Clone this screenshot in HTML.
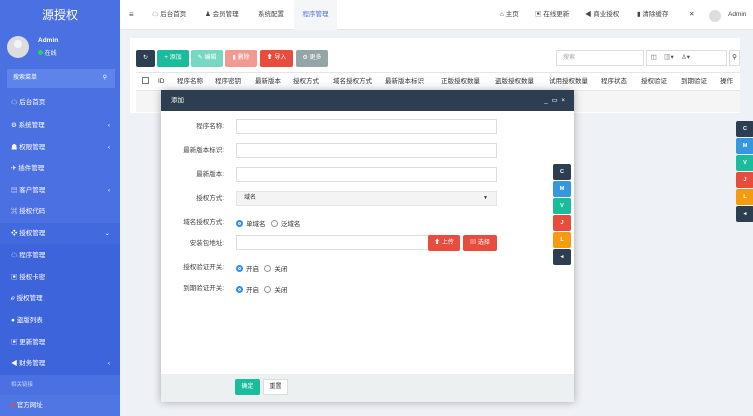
<!DOCTYPE html>
<html><head><meta charset="utf-8"><style>
*{box-sizing:border-box;margin:0;padding:0}
body{width:753px;height:405px;overflow:hidden;font-family:"Liberation Sans","Noto Sans CJK SC",sans-serif;font-size:7px;color:#333;background:#eef1f5;position:relative}
.a{position:absolute}
.sb{left:0;top:0;width:120px;height:405px;background:#4a70e2}
.logo{left:0;top:0;width:120px;height:31px;background:#4a70e2;color:#fff;font-size:12px;text-align:center;line-height:31px}
.mi{left:0;width:120px;height:21px;line-height:21px;color:#fff;padding-left:11px;font-size:6.5px}
.mi .ar{position:absolute;right:10px;top:0}
.top{left:120px;top:0;width:633px;height:30px;background:#fff;border-bottom:1px solid #e6e6e6}
.tn{top:0;height:30px;line-height:30px;font-size:6.5px;color:#444}
.btn{top:50px;height:17px;line-height:17px;color:#fff;font-size:6px;text-align:center;border-radius:2px}
.th{top:72px;height:19px;line-height:19px;font-size:6.5px;color:#333}
.lab{left:161px;width:63px;text-align:right;font-size:6.5px;color:#444;line-height:8px}
.inp{left:236px;width:261px;height:15px;border:1px solid #ddd;background:#fff}
.rad{display:inline-block;width:7px;height:7px;border-radius:50%;border:1px solid #999;vertical-align:-1px;margin-right:3px}
.rad.on{border:2px solid #2b8ef0;background:#2b8ef0;box-shadow:inset 0 0 0 1px #fff}
.sq{width:18px;height:16px;color:#fff;font-size:5.5px;text-align:center;line-height:16px;border-radius:2px;font-weight:bold}
</style></head><body>
<div class="a sb"></div>
<div class="a logo">源授权</div>
<div class="a" style="left:7px;top:36px;width:22px;height:22px;border-radius:50%;background:#ddd"></div>
<div class="a" style="left:14px;top:40px;width:8px;height:8px;border-radius:50%;background:#f4f4f4"></div>
<div class="a" style="left:38px;top:37px;color:#fff;font-weight:bold;font-size:6.5px">Admin</div>
<div class="a" style="left:38px;top:48px;color:#fff;font-size:6px"><span style="display:inline-block;width:5px;height:5px;border-radius:50%;background:#2ecc71"></span> 在线</div>
<div class="a" style="left:7px;top:69px;width:108px;height:19px;background:#5e84ea;color:#fff;line-height:19px;padding-left:6px;font-size:6px">搜索菜单<span style="position:absolute;right:8px">&#9906;</span></div>
<div class="a mi" style="top:92px">☁ 后台首页</div>
<div class="a mi" style="top:115px">⚙ 系统管理<span class="ar">‹</span></div>
<div class="a mi" style="top:137px">☗ 权限管理<span class="ar">‹</span></div>
<div class="a mi" style="top:158px">✈ 插件管理</div>
<div class="a mi" style="top:180px">▤ 客户管理<span class="ar">‹</span></div>
<div class="a mi" style="top:201px">⌘ 授权代码</div>
<div class="a mi" style="top:223px;background:#426ade">❖ 授权管理<span class="ar">⌄</span></div>
<div class="a" style="left:0;top:244px;width:120px;height:131px;background:#3e64dc"></div>
<div class="a mi" style="top:245px">☁ 程序管理</div>
<div class="a mi" style="top:267px">▣ 授权卡密</div>
<div class="a mi" style="top:288px">ℯ 授权管理</div>
<div class="a mi" style="top:310px">● 盗版列表</div>
<div class="a mi" style="top:332px">▣ 更新管理</div>
<div class="a mi" style="top:353px">◀ 财务管理<span class="ar">‹</span></div>
<div class="a mi" style="top:375px;background:#4a70e2;color:#c8d4f8;font-size:5.5px">相关链接</div>
<div class="a mi" style="top:395px;background:#5076e4"><span style="color:#e74c3c">■</span> 官方网址</div>

<div class="a top"></div>
<div class="a tn" style="left:129px;font-size:8px">≡</div>
<div class="a tn" style="left:152px">☁ 后台首页</div>
<div class="a tn" style="left:205px">♟ 会员管理</div>
<div class="a tn" style="left:258px">系统配置</div>
<div class="a tn" style="left:294px;width:43px;background:#f4f6f8;color:#4a70e2;text-align:center">程序管理</div>
<div class="a tn" style="left:500px">⌂ 主页</div>
<div class="a tn" style="left:535px">▣ 在线更新</div>
<div class="a tn" style="left:585px">◀ 商业授权</div>
<div class="a tn" style="left:637px">▮ 清除缓存</div>
<div class="a tn" style="left:689px">✕</div>
<div class="a" style="left:709px;top:10px;width:12px;height:12px;border-radius:50%;background:#ddd"></div>
<div class="a tn" style="left:728px">Admin</div>

<div class="a" style="left:130px;top:38px;width:610px;height:75px;background:#fff"></div>
<div class="a btn" style="left:136px;width:19px;background:#2c3e50">↻</div>
<div class="a btn" style="left:157px;width:32px;background:#1abc9c">+ 添加</div>
<div class="a btn" style="left:191px;width:32px;background:#76d8c3">✎ 编辑</div>
<div class="a btn" style="left:225px;width:32px;background:#f09a92">▮ 删除</div>
<div class="a btn" style="left:260px;width:33px;background:#e74c3c">⬆ 导入</div>
<div class="a btn" style="left:296px;width:32px;background:#95a5a6">⚙ 更多</div>
<div class="a" style="left:556px;top:50px;width:88px;height:16px;border:1px solid #ddd;font-size:6px;color:#aaa;line-height:14px;padding-left:6px">搜索</div>
<div class="a" style="left:646px;top:50px;width:81px;height:16px;border:1px solid #ddd;font-size:6.5px;line-height:14px;color:#555">&nbsp;&nbsp;◫&nbsp;&nbsp;&nbsp;&nbsp;▥▾&nbsp;&nbsp;&nbsp;&nbsp;♙▾</div>
<div class="a" style="left:729px;top:50px;width:11px;height:16px;border:1px solid #ddd;font-size:6.5px;line-height:14px;text-align:center">&#9906;</div>
<div class="a" style="left:136px;top:72px;width:604px;height:19px;border-top:1px solid #e5e5e5;border-bottom:1px solid #e5e5e5"></div>
<div class="a" style="left:136px;top:91px;width:604px;height:21px;background:#f5f5f5"></div>
<div class="a" style="left:142px;top:77px;width:7px;height:7px;border:1px solid #777"></div>
<div class="a th" style="left:158px">ID</div>
<div class="a th" style="left:177px">程序名称</div>
<div class="a th" style="left:215px">程序密钥</div>
<div class="a th" style="left:255px">最新版本</div>
<div class="a th" style="left:293px">授权方式</div>
<div class="a th" style="left:333px">域名授权方式</div>
<div class="a th" style="left:385px">最新版本标识</div>
<div class="a th" style="left:441px">正版授权数量</div>
<div class="a th" style="left:495px">盗版授权数量</div>
<div class="a th" style="left:549px">试用授权数量</div>
<div class="a th" style="left:601px">程序状态</div>
<div class="a th" style="left:641px">授权验证</div>
<div class="a th" style="left:681px">到期验证</div>
<div class="a th" style="left:720px">操作</div>

<div class="a" style="left:736px;top:121px">
<div class="sq" style="background:#2c3e50">C</div><div class="sq" style="background:#3498db;margin-top:1px">M</div><div class="sq" style="background:#1abc9c;margin-top:1px">V</div><div class="sq" style="background:#e74c3c;margin-top:1px">J</div><div class="sq" style="background:#f39c12;margin-top:1px">L</div><div class="sq" style="background:#2c3e50;margin-top:1px">◂</div>
</div>

<div class="a" style="left:161px;top:90px;width:413px;height:312px;background:#fff;box-shadow:0 0 8px rgba(0,0,0,.3)"></div>
<div class="a" style="left:161px;top:90px;width:413px;height:21px;background:#2c3e50;color:#fff;line-height:21px;padding-left:10px;font-size:6.5px">添加<span style="position:absolute;right:9px">_&nbsp;&nbsp;▭&nbsp;&nbsp;×</span></div>
<div class="a" style="left:553px;top:164px">
<div class="sq" style="background:#2c3e50">C</div><div class="sq" style="background:#3498db;margin-top:1px">M</div><div class="sq" style="background:#1abc9c;margin-top:1px">V</div><div class="sq" style="background:#e74c3c;margin-top:1px">J</div><div class="sq" style="background:#f39c12;margin-top:1px">L</div><div class="sq" style="background:#2c3e50;margin-top:1px">◂</div>
</div>
<div class="a lab" style="top:123px">程序名称:</div><div class="a inp" style="top:119px"></div>
<div class="a lab" style="top:147px">最新版本标识:</div><div class="a inp" style="top:143px"></div>
<div class="a lab" style="top:171px">最新版本:</div><div class="a inp" style="top:167px"></div>
<div class="a lab" style="top:195px">授权方式:</div><div class="a inp" style="top:191px;background:#f4f4f4;border-color:#e4e4e4;font-size:6px;line-height:13px;padding-left:7px">域名<span style="position:absolute;right:8px;font-size:5px">▼</span></div>
<div class="a lab" style="top:219px">域名授权方式:</div><div class="a" style="left:236px;top:218px;font-size:6.5px"><span class="rad on"></span>单域名&nbsp;&nbsp;&nbsp;<span class="rad"></span>泛域名</div>
<div class="a lab" style="top:240px">安装包地址:</div><div class="a inp" style="top:235px;width:193px"></div>
<div class="a" style="left:428px;top:235px;width:32px;height:16px;background:#e74c3c;color:#fff;font-size:6px;text-align:center;line-height:16px;border-radius:2px">⬆ 上传</div>
<div class="a" style="left:463px;top:235px;width:34px;height:16px;background:#e74c3c;color:#fff;font-size:6px;text-align:center;line-height:16px;border-radius:2px">▤ 选择</div>
<div class="a lab" style="top:264px">授权验证开关:</div><div class="a" style="left:236px;top:263px;font-size:6.5px"><span class="rad on"></span>开启&nbsp;&nbsp;&nbsp;<span class="rad"></span>关闭</div>
<div class="a lab" style="top:285px">到期验证开关:</div><div class="a" style="left:236px;top:284px;font-size:6.5px"><span class="rad on"></span>开启&nbsp;&nbsp;&nbsp;<span class="rad"></span>关闭</div>
<div class="a" style="left:161px;top:374px;width:413px;height:28px;background:#ecf0f1"></div>
<div class="a" style="left:235px;top:379px;width:25px;height:16px;background:#1abc9c;color:#fff;font-size:6px;text-align:center;line-height:16px;border-radius:2px">确定</div>
<div class="a" style="left:263px;top:379px;width:25px;height:16px;background:#fff;border:1px solid #ddd;font-size:6px;text-align:center;line-height:14px">重置</div>
</body></html>
